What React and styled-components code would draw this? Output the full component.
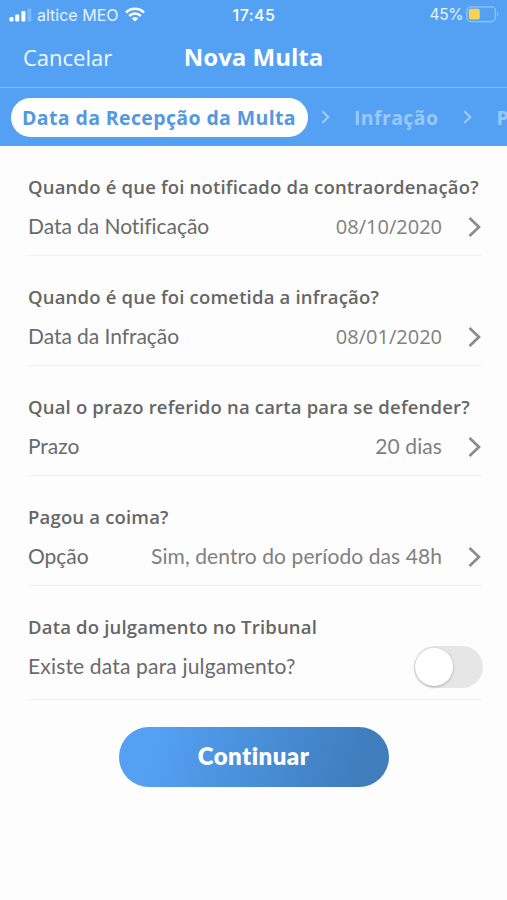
import React, { useState } from "react";
import styled, { createGlobalStyle } from "styled-components";

const fields = [
  {
    question: "Quando é que foi notificado da contraordenação?",
    label: "Data da Notificação",
    value: "08/10/2020",
    isDate: true,
  },
  {
    question: "Quando é que foi cometida a infração?",
    label: "Data da Infração",
    value: "08/01/2020",
    isDate: true,
  },
  {
    question: "Qual o prazo referido na carta para se defender?",
    label: "Prazo",
    value: "20 dias",
  },
  {
    question: "Pagou a coima?",
    label: "Opção",
    value: "Sim, dentro do período das 48h",
  },
];

const SignalIcon = () => (
  <svg width="24" height="14" viewBox="0 0 24 14" fill="#fff">
    <rect x="0.5" y="9" width="4" height="4.5" rx="1" />
    <rect x="6.2" y="6.5" width="4" height="7" rx="1" />
    <rect x="12.4" y="3" width="4" height="10.5" rx="1" />
    <rect x="18.4" y="0.5" width="4" height="13" rx="1" opacity="0.25" />
  </svg>
);

const WifiIcon = () => (
  <svg width="20" height="15" viewBox="0 0 20 15" fill="none" stroke="#fff" strokeWidth="2.5">
    <path d="M1 5.6C6 0.5 14 0.5 19 5.6" />
    <path d="M4.2 9C7.4 5.8 12.6 5.8 15.8 9" />
    <path d="M10 14.6L6.8 11.4C8.6 9.8 11.4 9.8 13.2 11.4Z" fill="#fff" stroke="none" />
  </svg>
);

const BatteryIcon = () => (
  <svg width="33" height="17" viewBox="0 0 33 17">
    <rect x="0.8" y="0.8" width="28.6" height="14.8" rx="4" fill="none" stroke="#8fc5fb" strokeWidth="1.2" />
    <rect x="2.8" y="2.8" width="11" height="10.8" rx="2" fill="#f7d351" />
    <path d="M31 5.6C32.6 6.4 32.6 10 31 10.8Z" fill="#8fc5fb" />
  </svg>
);

const StepArrow = () => (
  <svg width="9" height="14" viewBox="0 0 9 14" fill="none" stroke="#a3d0fb" strokeWidth="1.9">
    <path d="M1.2 1.1L7.4 7L1.2 12.9" />
  </svg>
);

const RowArrow = () => (
  <svg width="13" height="20" viewBox="0 0 13 20" fill="none" stroke="#8b8b8b" strokeWidth="2.7">
    <path d="M1.5 1L11 10L1.5 19" />
  </svg>
);

const App = () => {
  const [hasTrial, setHasTrial] = useState(false);

  return (
    <Screen>
      <GlobalStyle />
      <Header>
        <StatusBar>
          <Carrier>
            <SignalIcon />
            <CarrierName>altice MEO</CarrierName>
            <WifiIcon />
          </Carrier>
          <Clock>17:45</Clock>
          <Battery>
            <span>45%</span>
            <BatteryIcon />
          </Battery>
        </StatusBar>
        <NavBar>
          <Cancel>Cancelar</Cancel>
          <Title>Nova Multa</Title>
        </NavBar>
        <Steps>
          <ActiveStep>Data da Recepção da Multa</ActiveStep>
          <StepArrow />
          <Step>Infração</Step>
          <StepArrow />
          <Step>P</Step>
        </Steps>
      </Header>

      <Form>
        {fields.map((field) => (
          <Group key={field.label}>
            <Question>{field.question}</Question>
            <Row>
              <Label>{field.label}</Label>
              <Value $date={field.isDate}>{field.value}</Value>
              <RowArrow />
            </Row>
          </Group>
        ))}
        <Group $tall>
          <Question>Data do julgamento no Tribunal</Question>
          <Row>
            <Label $wide>Existe data para julgamento?</Label>
            <Toggle
              role="switch"
              aria-checked={hasTrial}
              aria-label="Existe data para julgamento?"
              $on={hasTrial}
              onClick={() => setHasTrial(!hasTrial)}
            >
              <Knob />
            </Toggle>
          </Row>
        </Group>
        <Continue>Continuar</Continue>
      </Form>
    </Screen>
  );
};

const GlobalStyle = createGlobalStyle`
  * { box-sizing: border-box; }
  body { margin: 0; background: #fdfdfd; }
  button { border: 0; padding: 0; background: none; font: inherit; cursor: pointer; }
  svg { display: block; flex-shrink: 0; }
`;

const Screen = styled.div`
  width: 100%;
  max-width: 507px;
  height: 900px;
  overflow: hidden;
  background: #fdfdfd;
  font-family: "Open Sans", sans-serif;
  font-variant-ligatures: none;
`;

const Header = styled.header`
  background: #54a1f4;
  color: #fff;
`;

const StatusBar = styled.div`
  display: grid;
  grid-template-columns: 1fr auto 1fr;
  align-items: center;
  height: 29px;
  padding: 0 8px 0 9px;
  font-family: Inter, sans-serif;
  font-size: 16px;
  line-height: 20px;
`;

const Carrier = styled.div`
  display: flex;
  align-items: center;
`;

const CarrierName = styled.span`
  margin: 0 7px 0 4px;
  color: #e6f3ff;
`;

const Clock = styled.span`
  font-weight: 500;
  letter-spacing: 0.5px;
`;

const Battery = styled.div`
  display: flex;
  align-items: center;
  justify-content: flex-end;
  gap: 3px;
  color: #e6f3ff;
  font-size: 15.5px;
  letter-spacing: -0.4px;
`;

const NavBar = styled.div`
  display: grid;
  grid-template-columns: 1fr auto 1fr;
  align-items: center;
  height: 59px;
  padding: 0 23px 3px;
  border-bottom: 1px solid #7fbcf9;
`;

const Cancel = styled.button`
  justify-self: start;
  color: #f0f8ff;
  font-size: 22px;
  font-weight: 500;
  line-height: 30px;
`;

const Title = styled.h1`
  margin: 0;
  font-size: 24px;
  font-weight: 700;
  line-height: 30px;
`;

const Steps = styled.nav`
  display: flex;
  align-items: center;
  height: 58px;
  padding-left: 11px;
  overflow: hidden;
  white-space: nowrap;
  font-size: 19.5px;
  font-weight: 700;
  letter-spacing: 0.38px;
`;

const ActiveStep = styled.span`
  height: 39px;
  margin-right: 13px;
  padding: 0 12px 0 11px;
  border-radius: 20px;
  background: #fff;
  color: #5398e0;
  line-height: 39px;
`;

const Step = styled.span`
  margin: 0 25px 0 24px;
  color: #97c9fb;
`;

const Form = styled.main`
  display: flex;
  flex-direction: column;
  padding: 0 26px 0 28px;
`;

const Group = styled.section`
  height: ${(p) => (p.$tall ? "114px" : "110px")};
  padding-top: 28px;
  border-bottom: 1px solid #f1f1f1;
`;

const Question = styled.h2`
  margin: 0;
  color: #666;
  font-size: 18.5px;
  font-weight: 600;
  letter-spacing: 0.18px;
  line-height: 26px;
  white-space: nowrap;
`;

const Row = styled.div`
  display: flex;
  align-items: center;
  height: 54px;
  font-family: Lato, sans-serif;
  font-size: 21px;
  line-height: 26px;
`;

const Label = styled.span`
  flex: 1;
  padding-bottom: 2px;
  color: #6a6a6a;
  letter-spacing: ${(p) => (p.$wide ? "0.17px" : "-0.05px")};
`;

const Value = styled.span`
  margin-right: 26px;
  padding-bottom: ${(p) => (p.$date ? "0" : "2px")};
  color: #808080;
  font-family: ${(p) => (p.$date ? '"Open Sans", sans-serif' : "inherit")};
  font-size: ${(p) => (p.$date ? "20px" : "21px")};
  letter-spacing: ${(p) => (p.$date ? "0" : "0.08px")};
`;

const Toggle = styled.button`
  display: flex;
  align-items: center;
  justify-content: ${(p) => (p.$on ? "flex-end" : "flex-start")};
  width: 69px;
  height: 42px;
  margin-right: -2px;
  padding: 0 1px;
  border-radius: 21px;
  background: ${(p) => (p.$on ? "#54a1f4" : "#e6e6e6")};
`;

const Knob = styled.span`
  width: 38px;
  height: 38px;
  border-radius: 50%;
  background: #fff;
  box-shadow: 0 1px 3px rgba(0, 0, 0, 0.25);
`;

const Continue = styled.button`
  align-self: center;
  width: 270px;
  height: 60px;
  margin: 27px 2px 0 0;
  padding-bottom: 3px;
  border-radius: 30px;
  background: linear-gradient(105deg, #54a1f4 12%, #3f7dbd 88%);
  color: #fff;
  font-family: Lato, sans-serif;
  font-size: 24px;
  font-weight: 800;
  letter-spacing: 0.45px;
`;

export default App;
